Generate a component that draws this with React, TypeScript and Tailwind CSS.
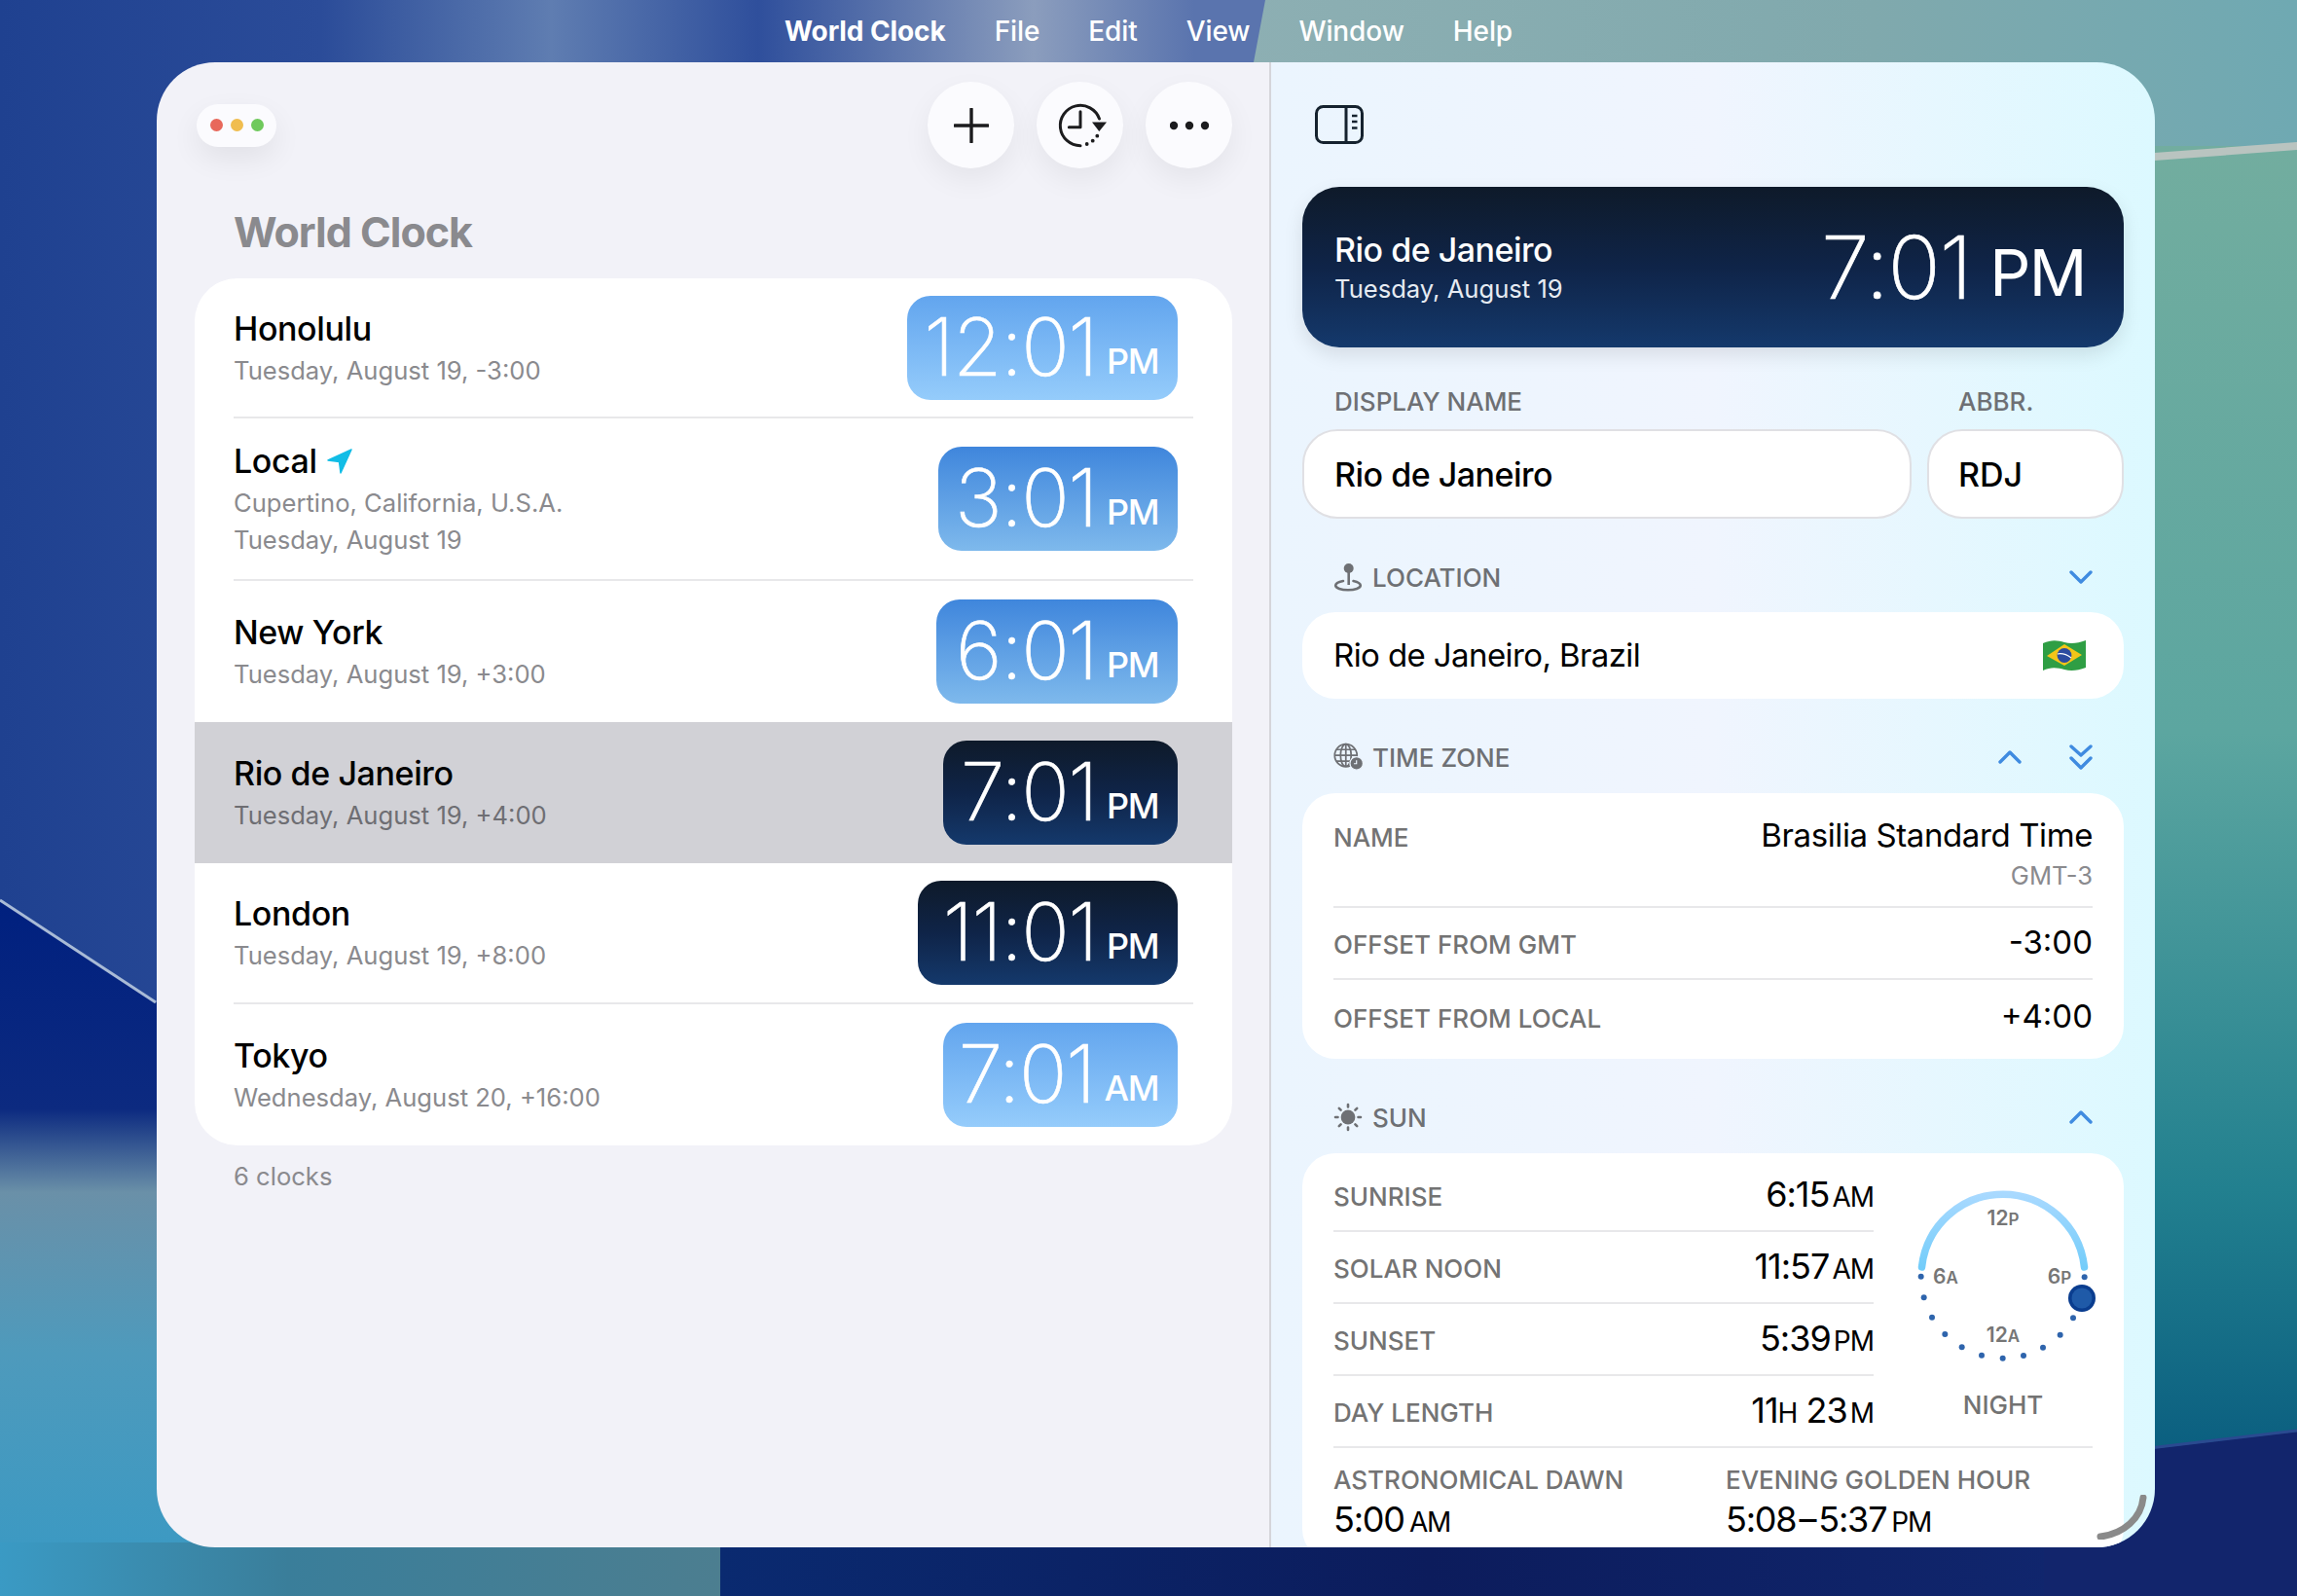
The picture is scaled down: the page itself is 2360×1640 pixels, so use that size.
import React from 'react';

type Clock = { name: string; lines: string[]; time: string; period: string; pillWidth: string; pillColor: string; rowHeight: string; selected?: boolean; showLocal?: boolean; noBorder?: boolean };

const lightDay = 'bg-gradient-to-b from-[#62a5ee] to-[#95ccfb]';
const midDay = 'bg-gradient-to-b from-[#3f86dc] to-[#7eb9ec]';
const night = 'bg-gradient-to-b from-[#0e1a2a] via-[#0f2448] to-[#14396c]';

const clocks: Clock[] = [
  { name: 'Honolulu', lines: ['Tuesday, August 19, -3:00'], time: '12:01', period: 'PM', pillWidth: 'w-[278px]', pillColor: lightDay, rowHeight: 'h-[144px]' },
  { name: 'Local', lines: ['Cupertino, California, U.S.A.', 'Tuesday, August 19'], time: '3:01', period: 'PM', pillWidth: 'w-[246px]', pillColor: midDay, rowHeight: 'h-[167px]', showLocal: true },
  { name: 'New York', lines: ['Tuesday, August 19, +3:00'], time: '6:01', period: 'PM', pillWidth: 'w-[248px]', pillColor: midDay, rowHeight: 'h-[145px]', noBorder: true },
  { name: 'Rio de Janeiro', lines: ['Tuesday, August 19, +4:00'], time: '7:01', period: 'PM', pillWidth: 'w-[241px]', pillColor: night, rowHeight: 'h-[145px]', selected: true, noBorder: true },
  { name: 'London', lines: ['Tuesday, August 19, +8:00'], time: '11:01', period: 'PM', pillWidth: 'w-[267px]', pillColor: night, rowHeight: 'h-[145px]' },
  { name: 'Tokyo', lines: ['Wednesday, August 20, +16:00'], time: '7:01', period: 'AM', pillWidth: 'w-[241px]', pillColor: lightDay, rowHeight: 'h-[145px]', noBorder: true },
];

const Wallpaper = () => (
  <svg className="absolute inset-0 w-[2360px] h-[1640px]" viewBox="0 0 2360 1640">
    <defs>
      <linearGradient id="blue" x1="0" x2="1" y1="0" y2="0">
        <stop offset="0" stopColor="#1f4190" />
        <stop offset="0.14" stopColor="#2b4c99" />
        <stop offset="0.24" stopColor="#5f7db1" />
        <stop offset="0.33" stopColor="#2f4f9c" />
        <stop offset="0.45" stopColor="#8b9dbd" />
        <stop offset="0.52" stopColor="#5a74ae" />
        <stop offset="1" stopColor="#5a74ae" />
      </linearGradient>
      <linearGradient id="teal" x1="0" x2="0" y1="0" y2="1">
        <stop offset="0" stopColor="#72ad9f" />
        <stop offset="0.45" stopColor="#5ca6a0" />
        <stop offset="0.8" stopColor="#22808f" />
        <stop offset="1" stopColor="#0b5f80" />
      </linearGradient>
      <linearGradient id="sky" x1="0" x2="1" y1="0" y2="0">
        <stop offset="0" stopColor="#8dafb3" />
        <stop offset="0.6" stopColor="#80a9ad" />
        <stop offset="1" stopColor="#6fa9b2" />
      </linearGradient>
      <linearGradient id="leftLow" x1="0" x2="0" y1="0" y2="1">
        <stop offset="0" stopColor="#00207f" />
        <stop offset="0.3" stopColor="#0c2a80" />
        <stop offset="0.42" stopColor="#6a90a8" />
        <stop offset="0.65" stopColor="#4e9abc" />
        <stop offset="1" stopColor="#3899c4" />
      </linearGradient>
      <linearGradient id="navy" x1="0" x2="1" y1="0" y2="0">
        <stop offset="0" stopColor="#0a2a70" />
        <stop offset="0.45" stopColor="#0c1c5c" />
        <stop offset="1" stopColor="#122a74" />
      </linearGradient>
      <linearGradient id="bottomSeam" x1="0" x2="1" y1="0" y2="0">
        <stop offset="0" stopColor="#3a9ac4" />
        <stop offset="0.4" stopColor="#3a7e9a" />
        <stop offset="1" stopColor="#4c7e90" />
      </linearGradient>
    </defs>
    <rect width="2360" height="1640" fill="url(#blue)" />
    <polygon points="1300,0 2360,0 2360,160 1270,160" fill="url(#sky)" />
    <rect x="1270" y="150" width="1090" height="1340" fill="url(#teal)" />
    <polygon points="2200,158 2360,146 2360,154 2200,166" fill="#b9c4c0" />
    <polygon points="0,925 160,1030 300,1120 300,1640 0,1640" fill="url(#leftLow)" />
    <line x1="0" y1="925" x2="160" y2="1030" stroke="#a9bbd6" strokeWidth="3" />
    <rect x="0" y="1585" width="740" height="55" fill="url(#bottomSeam)" />
    <rect x="740" y="1585" width="1620" height="55" fill="url(#navy)" />
    <polygon points="2100,1502 2360,1471 2360,1640 2100,1640" fill="#12256c" />
    <line x1="2200" y1="1489" x2="2360" y2="1470" stroke="#2a4a90" strokeWidth="3" />
  </svg>
);

const PlusIcon = () => (
  <svg width="36" height="36" viewBox="0 0 36 36" fill="none" stroke="#1c1c1e" strokeWidth="3.4" strokeLinecap="round">
    <path d="M18 1V35M1 18H35" />
  </svg>
);

const TimeForwardIcon = () => (
  <svg width="60" height="60" viewBox="0 0 60 60" fill="none" stroke="#1c1c1e" strokeWidth="3" strokeLinecap="round" strokeLinejoin="round">
    <path d="M30 50.7A20.7 20.7 0 1 1 49.5 23" />
    <path d="M30 15.7V31.7H18.3" />
    <path d="M42 26.5H57L49.3 36Z" fill="#1c1c1e" stroke="none" />
    <g fill="#1c1c1e" stroke="none">
      <circle cx="36.7" cy="49" r="1.9" />
      <circle cx="42.7" cy="45.7" r="1.9" />
      <circle cx="47.3" cy="40.7" r="1.9" />
    </g>
  </svg>
);

const MoreIcon = () => (
  <svg width="40" height="10" viewBox="0 0 40 10" fill="#1c1c1e">
    <circle cx="4" cy="5" r="4.2" />
    <circle cx="20" cy="5" r="4.2" />
    <circle cx="36" cy="5" r="4.2" />
  </svg>
);

const SidebarIcon = () => (
  <svg width="50" height="40" viewBox="0 0 50 40" fill="none" stroke="#15222e" strokeWidth="3">
    <rect x="1.5" y="1.5" width="47" height="37" rx="7" />
    <path d="M32 1.5V38.5" />
    <path d="M38 11H43.5M38 17H43.5M38 23.5H43.5" strokeWidth="2.4" />
  </svg>
);

const LocationArrow = () => (
  <svg width="26" height="26" viewBox="0 0 26 26" fill="#12bde6" stroke="#12bde6" strokeWidth="1.5" strokeLinejoin="round">
    <path d="M25 1L1 12L12.5 13.5L14 25Z" />
  </svg>
);

const PinIcon = () => (
  <svg width="30" height="30" viewBox="0 0 30 30" fill="none" stroke="#6e7074" strokeWidth="2.6">
    <circle cx="15.7" cy="6" r="5" fill="#6e7074" stroke="none" />
    <path d="M15.7 8V23" strokeWidth="2.6" />
    <path d="M10 19C5 20 2.2 21.5 2.2 23.6C2.2 26.4 8 28.2 15 28.2C22 28.2 27.8 26.4 27.8 23.6C27.8 21.5 25 20 20.5 19" strokeLinecap="round" />
  </svg>
);

const GlobeIcon = () => (
  <svg width="36" height="34" viewBox="0 0 34 32" fill="none" stroke="#6e7074" strokeWidth="1.9">
    <circle cx="14" cy="14" r="12.6" />
    <ellipse cx="14" cy="14" rx="6" ry="12.6" />
    <path d="M14 1.4V26.6M1.4 14H26.6M3.4 7.5H24.6M3.4 20.5H24.6" />
    <circle cx="26" cy="23" r="7.4" fill="#6e7074" stroke="#edf5fe" strokeWidth="1.4" />
    <path d="M26 19.5V23.4H23" stroke="#edf5fe" strokeWidth="1.3" />
  </svg>
);

const SunIcon = () => (
  <svg width="30" height="30" viewBox="0 0 30 30" fill="#6e7074" stroke="#6e7074" strokeWidth="2.6" strokeLinecap="round">
    <circle cx="15" cy="15" r="7.4" stroke="none" />
    <path d="M15 2V4.5M15 25.5V28M2 15H4.5M25.5 15H28M5.8 5.8L7.6 7.6M22.4 22.4L24.2 24.2M5.8 24.2L7.6 22.4M22.4 7.6L24.2 5.8" />
  </svg>
);

const ChevronUp = () => (
  <svg width="24" height="14" viewBox="0 0 24 14" fill="none" stroke="#3f8be0" strokeWidth="3.4" strokeLinecap="round" strokeLinejoin="round">
    <path d="M2 12L12 2L22 12" />
  </svg>
);

const ChevronDown = () => (
  <svg width="24" height="14" viewBox="0 0 24 14" fill="none" stroke="#3f8be0" strokeWidth="3.4" strokeLinecap="round" strokeLinejoin="round">
    <path d="M2 2L12 12L22 2" />
  </svg>
);

const ChevronsDown = () => (
  <svg width="24" height="26" viewBox="0 0 24 26" fill="none" stroke="#3f8be0" strokeWidth="3.4" strokeLinecap="round" strokeLinejoin="round">
    <path d="M2 2L12 11L22 2M2 14L12 24L22 14" />
  </svg>
);

const BrazilFlag = () => (
  <svg width="46" height="33" viewBox="0 0 46 33">
    <path d="M1 4C10 0 16 1 23 3C30 5 37 4 45 1V29C37 32 30 33 23 31C16 29 9 28 1 32Z" fill="#2f9e44" />
    <path d="M23 5L41 16L23 27L5 17Z" fill="#f5c518" />
    <circle cx="23" cy="16.5" r="7.4" fill="#2c4ba0" />
    <path d="M16 15C21 14 26 16 30 19" stroke="#ffffff" strokeWidth="1.2" fill="none" />
  </svg>
);

const dialDots = [
  [101, 335], [110, 400], [135, 461], [175, 513], [227, 553], [288, 578], [353, 587], [417, 579], [477, 554], [530, 515], [570, 463], [605, 337],
];

const DialLabel = ({ x, y, big, small }: { x: number; y: number; big: string; small: string }) => (
  <text x={x} y={y} textAnchor="middle" className="fill-[#767676] text-[21px] font-semibold">
    {big}
    <tspan className="text-[17px]">{small}</tspan>
  </text>
);

const SunDial = () => (
  <svg width="184" height="220" viewBox="0 0 184 220" className="overflow-visible">
    <defs>
      <linearGradient id="dayArc" x1="0" x2="0" y1="0" y2="1">
        <stop offset="0" stopColor="#a8d9ff" />
        <stop offset="1" stopColor="#74cdfa" />
      </linearGradient>
    </defs>
    <path d="M8.5 110A84 84 0 0 1 175.5 110" fill="none" stroke="url(#dayArc)" strokeWidth="7.5" strokeLinecap="round" />
    {dialDots.map(([x, y]) => (
      <circle key={x} cx={x / 3 - 26} cy={y / 3 + 8} r="3" fill="#2e64ac" />
    ))}
    <circle cx="173" cy="142" r="14" fill="#0a3d8f" />
    <circle cx="173" cy="142" r="10.5" fill="#1f5aa8" />
    <DialLabel x={92} y={67} big="12" small="P" />
    <DialLabel x={33} y={127} big="6" small="A" />
    <DialLabel x={150} y={127} big="6" small="P" />
    <DialLabel x={92} y={187} big="12" small="A" />
  </svg>
);

const ClockPill = ({ clock }: { clock: Clock }) => (
  <div className={`${clock.pillWidth} ${clock.pillColor} h-[107px] rounded-[24px] flex items-end justify-end pr-[20px] pb-[13px] text-white`}>
    <span className="text-[82px] leading-[82px] font-extralight [-webkit-text-stroke:0.6px_white] tracking-[-1.5px]">{clock.time}</span>
    <span className="ml-[10px] text-[36px] leading-[36px] font-medium mb-[9px] tracking-[-1.5px]">{clock.period}</span>
  </div>
);

const ClockRow = ({ clock }: { clock: Clock }) => (
  <div className={clock.selected ? 'bg-[#d1d1d6]' : ''}>
    <div className={`${clock.rowHeight} ml-[40px] mr-[40px] pr-[16px] flex items-center justify-between ${clock.noBorder ? '' : 'border-b-2 border-[#e8e8ea]'}`}>
      <div className="pt-[2px]">
        <div className="flex items-center gap-[10px] text-[34px] leading-[42px] font-medium text-black tracking-[-0.4px]">
          {clock.name}
          {clock.showLocal && <LocationArrow />}
        </div>
        <div className="mt-[3px]">
          {clock.lines.map(line => (
            <div key={line} className={`text-[25.6px] leading-[38px] ${clock.selected ? 'text-[#6e6e73]' : 'text-[#8a8a8e]'}`}>{line}</div>
          ))}
        </div>
      </div>
      <ClockPill clock={clock} />
    </div>
  </div>
);

const SectionHeader = ({ icon, title, children }: { icon: React.ReactNode; title: string; children: React.ReactNode }) => (
  <div className="h-[36px] flex items-center justify-between pl-[32px] pr-[32px]">
    <div className="flex items-center gap-[9px] text-[26px] font-medium text-[#6e7074]">
      <span className="w-[31px] flex justify-start">{icon}</span>
      {title}
    </div>
    <div className="flex items-center gap-[49px]">{children}</div>
  </div>
);

const Label = ({ children }: { children: React.ReactNode }) => (
  <span className="text-[26px] leading-[32px] font-medium text-[#737373]">{children}</span>
);

const SunRow = ({ label, value, unit, border, height }: { label: string; value: React.ReactNode; unit: string; border?: boolean; height: string }) => (
  <div className={`${height} flex items-center justify-between ${border ? 'border-b-2 border-[#e8e8ea]' : ''}`}>
    <div className="pt-[4px]"><Label>{label}</Label></div>
    <span className="pb-[3px] text-[36px] font-normal text-black tracking-[-1px]">
      {value}
      <span className="ml-[3px] text-[28px] tracking-[-1px]">{unit}</span>
    </span>
  </div>
);

export default function App() {
  return (
    <div className="relative w-[2360px] h-[1640px] overflow-hidden font-[Inter,sans-serif]">
      <Wallpaper />

      <div className="relative h-[64px] pl-[806px] flex items-center gap-[50px] text-[28px] font-medium text-white tracking-[-0.1px]">
        <span className="font-bold">World Clock</span>
        <span>File</span>
        <span>Edit</span>
        <span>View</span>
        <span>Window</span>
        <span>Help</span>
      </div>

      <div className="relative ml-[161px] w-[2053px] h-[1526px] rounded-[60px] overflow-hidden flex">
        <div className="w-[1145px] h-full shrink-0 bg-[#f2f2f8] border-r-2 border-[#d5d5da] pl-[39px] pr-[38px] pt-[20px]">
          <div className="flex items-center justify-between">
            <div className="ml-[2px] w-[82px] h-[44px] rounded-[22px] bg-[#fbfbfe] shadow-[0_12px_30px_rgba(0,0,0,0.07)] flex items-center justify-center gap-[8px]">
              <span className="w-[13px] h-[13px] rounded-full bg-[#e8685b]" />
              <span className="w-[13px] h-[13px] rounded-full bg-[#f0bd4f]" />
              <span className="w-[13px] h-[13px] rounded-full bg-[#6fc95c]" />
            </div>
            <div className="flex gap-[23px]">
              <button className="w-[89px] h-[89px] rounded-full bg-[#fbfbfe] shadow-[0_12px_30px_rgba(0,0,0,0.06)] flex items-center justify-center"><PlusIcon /></button>
              <button className="w-[89px] h-[89px] rounded-full bg-[#fbfbfe] shadow-[0_12px_30px_rgba(0,0,0,0.06)] flex items-center justify-center"><TimeForwardIcon /></button>
              <button className="w-[89px] h-[89px] rounded-full bg-[#fbfbfe] shadow-[0_12px_30px_rgba(0,0,0,0.06)] flex items-center justify-center"><MoreIcon /></button>
            </div>
          </div>

          <h1 className="mt-[40px] ml-[40px] text-[43px] leading-[50px] font-bold text-[#8a8a8e] tracking-[-1px]">World Clock</h1>

          <div className="mt-[23px] rounded-[44px] bg-white overflow-hidden">
            {clocks.map(clock => <ClockRow key={clock.name} clock={clock} />)}
          </div>

          <p className="mt-[15px] ml-[40px] text-[25.6px] leading-[34px] text-[#8a8a8e]">6 clocks</p>
        </div>

        <div className="relative flex-1 bg-gradient-to-r from-[#ebf5fe] via-[#f0f5fe] to-[#dcf9ff] px-[32px] pt-[44px]">
          <div className="pl-[13px] h-[40px]"><SidebarIcon /></div>

          <div className="mt-[44px] h-[165px] rounded-[38px] bg-gradient-to-b from-[#0e1a2a] via-[#0f2448] to-[#14396c] shadow-[0_8px_20px_rgba(0,0,0,0.1)] flex items-center justify-between pl-[33px] pr-[39px] text-white">
            <div>
              <div className="text-[34px] leading-[44px] font-medium tracking-[-0.5px]">Rio de Janeiro</div>
              <div className="text-[25.6px] leading-[36px] text-[#e6ebf2]">Tuesday, August 19</div>
            </div>
            <div className="flex items-end">
              <span className="text-[90px] leading-[88px] font-extralight [-webkit-text-stroke:0.7px_white] tracking-[-1.5px]">7:01</span>
              <span className="ml-[19px] mb-[4px] text-[66px] leading-[70px] font-normal tracking-[-1.5px]">PM</span>
            </div>
          </div>

          <div className="mt-[40px] flex gap-[16px]">
            <div className="w-[626px]">
              <div className="pl-[33px] text-[26px] leading-[32px] font-medium text-[#6e7074]">DISPLAY NAME</div>
              <div className="mt-[12px] h-[92px] rounded-[36px] bg-white border-2 border-[#e0e0e4] flex items-center pl-[31px] text-[34px] font-medium text-black tracking-[-0.5px]">Rio de Janeiro</div>
            </div>
            <div className="flex-1">
              <div className="pl-[32px] text-[26px] leading-[32px] font-medium text-[#6e7074]">ABBR.</div>
              <div className="mt-[12px] h-[92px] rounded-[36px] bg-white border-2 border-[#e0e0e4] flex items-center pl-[30px] text-[34px] font-medium text-black">RDJ</div>
            </div>
          </div>

          <div className="mt-[42px]">
            <SectionHeader icon={<PinIcon />} title="LOCATION"><ChevronDown /></SectionHeader>
          </div>
          <div className="mt-[18px] h-[89px] rounded-[34px] bg-white flex items-center justify-between pl-[32px] pr-[38px] text-[33px] text-black tracking-[-0.6px]">
            Rio de Janeiro, Brazil
            <BrazilFlag />
          </div>

          <div className="mt-[42px]">
            <SectionHeader icon={<GlobeIcon />} title="TIME ZONE"><ChevronUp /><ChevronsDown /></SectionHeader>
          </div>
          <div className="mt-[19px] rounded-[34px] bg-white px-[32px]">
            <div className="h-[118px] pt-[25px] flex justify-between border-b-2 border-[#e8e8ea]">
              <div className="pt-[5px]"><Label>NAME</Label></div>
              <div className="text-right">
                <div className="text-[33px] leading-[36px] text-black tracking-[-0.4px]">Brasilia Standard Time</div>
                <div className="mt-[8px] text-[25.6px] leading-[32px] text-[#8a8a8e]">GMT-3</div>
              </div>
            </div>
            <div className="h-[74px] flex items-center justify-between border-b-2 border-[#e8e8ea]">
              <div className="pt-[4px]"><Label>OFFSET FROM GMT</Label></div>
              <span className="text-[33px] text-black">-3:00</span>
            </div>
            <div className="h-[81px] pb-[6px] flex items-center justify-between">
              <div className="pt-[4px]"><Label>OFFSET FROM LOCAL</Label></div>
              <span className="text-[33px] text-black">+4:00</span>
            </div>
          </div>

          <div className="mt-[42px]">
            <SectionHeader icon={<SunIcon />} title="SUN"><ChevronUp /></SectionHeader>
          </div>
          <div className="mt-[19px] rounded-[34px] bg-white px-[32px] pt-[7px] h-[420px]">
            <div className="flex border-b-2 border-[#e8e8ea]">
              <div className="w-[555px]">
                <SunRow label="SUNRISE" value="6:15" unit="AM" border height="h-[74px]" />
                <SunRow label="SOLAR NOON" value="11:57" unit="AM" border height="h-[74px]" />
                <SunRow label="SUNSET" value="5:39" unit="PM" border height="h-[74px]" />
                <SunRow label="DAY LENGTH" value={<>11<span className="text-[28px]">H</span> 23</>} unit="M" height="h-[72px]" />
              </div>
              <div className="ml-[41px] w-[184px] relative">
                <SunDial />
                <div className="absolute left-0 right-0 top-[236px] text-center"><Label>NIGHT</Label></div>
              </div>
            </div>
            <div className="mt-[17px] flex">
              <div className="w-[403px]">
                <Label>ASTRONOMICAL DAWN</Label>
                <div className="-mt-[3px] text-[36px] text-black tracking-[-1.2px]">5:00<span className="ml-[5px] text-[28px]">AM</span></div>
              </div>
              <div>
                <Label>EVENING GOLDEN HOUR</Label>
                <div className="-mt-[3px] text-[36px] text-black tracking-[-1.2px]">5:08<span className="mx-[3px]">–</span>5:37<span className="ml-[5px] text-[28px]">PM</span></div>
              </div>
            </div>
          </div>

          <svg className="absolute right-[8px] bottom-[8px]" width="52" height="46" viewBox="0 0 52 46" fill="none" stroke="#8a8a8a" strokeWidth="7" strokeLinecap="round">
            <path d="M48 3C46 24 28 40 4 43" />
          </svg>
        </div>
      </div>
    </div>
  );
}
